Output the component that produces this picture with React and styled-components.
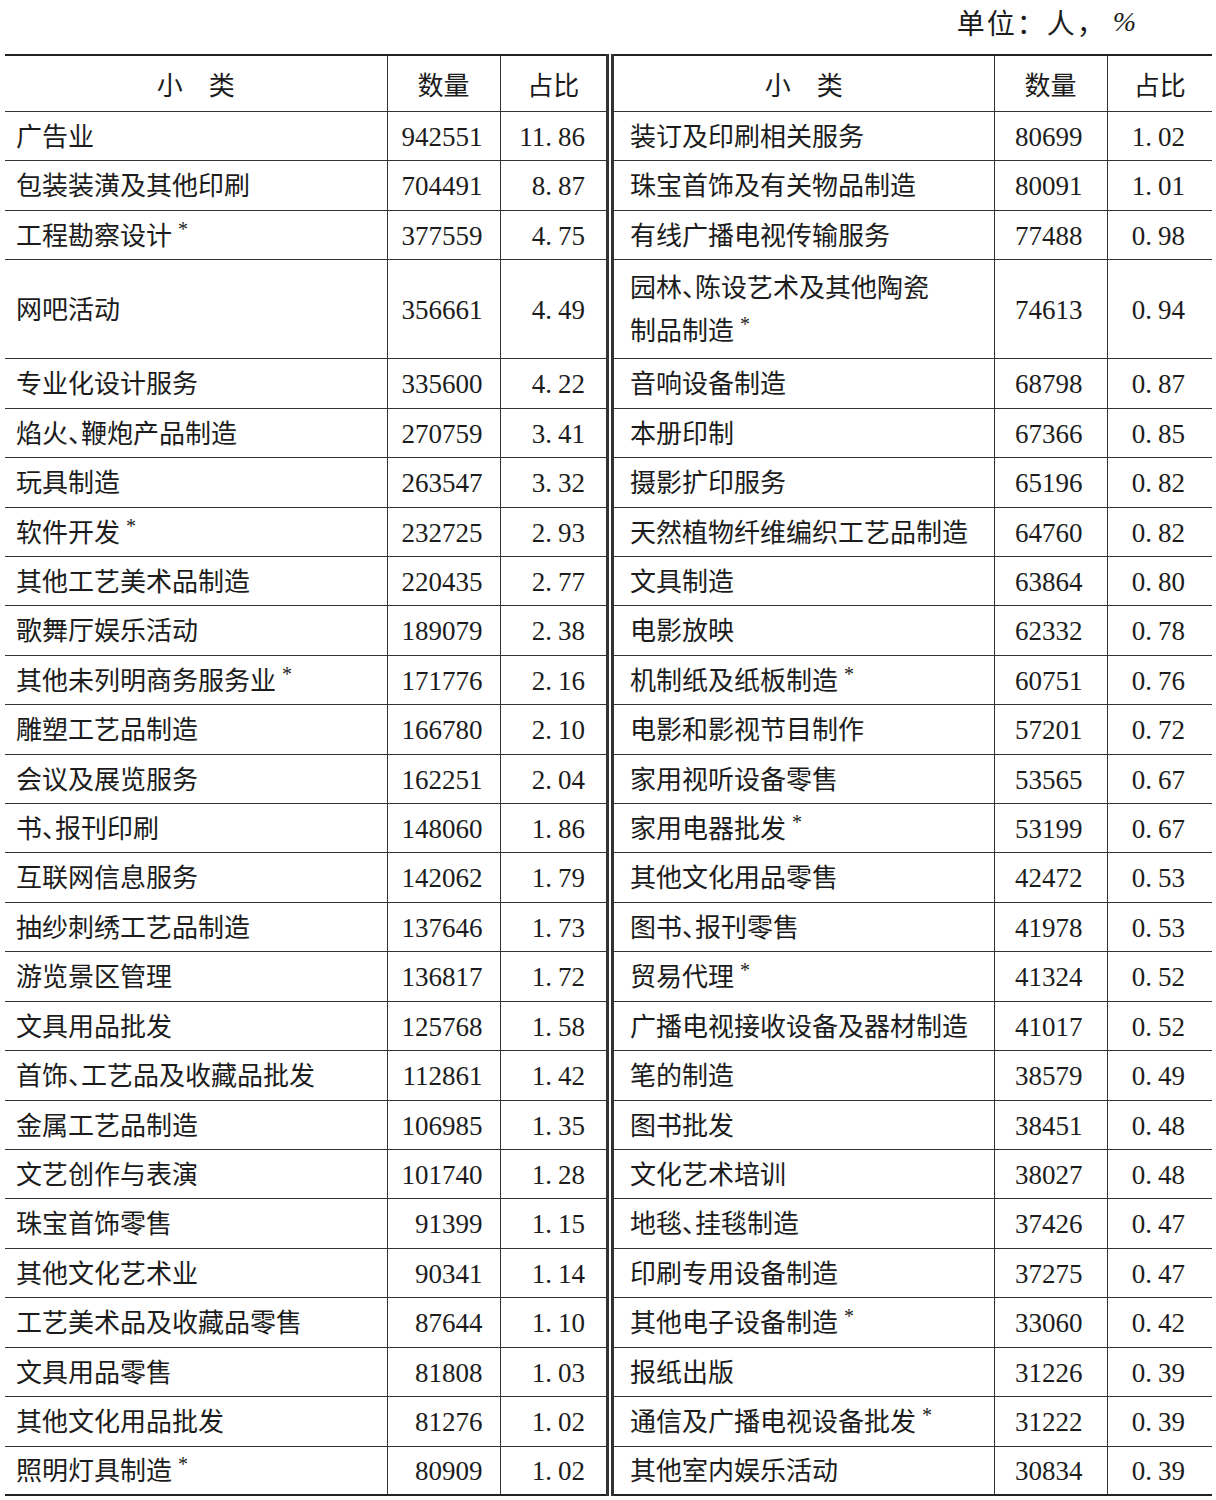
import React from 'react'
import styled, { createGlobalStyle } from 'styled-components'

const GlobalStyle = createGlobalStyle`
    body {
        margin: 0;
        background: #ffffff;
        color: #1c1c1c;
        font-family: "Liberation Serif", "Noto Sans CJK SC", serif;
    }
`

const Page = styled.div`
    width: 1216px;
    padding: 0 4px 0 5px;
    box-sizing: border-box;
`
const Unit = styled.div`
    height: 54px;
    display: flex;
    align-items: center;
    justify-content: flex-end;
    padding-right: 74px;
    padding-bottom: 10px;
    box-sizing: border-box;
    font-size: 28px;
    letter-spacing: 2px;
`
const Percent = styled.span`
    font-style: italic;
    margin-left: 6px;
`
const Table = styled.table`
    width: 1207px;
    border-collapse: collapse;
    table-layout: fixed;
    border-top: 2.5px solid #222;
    border-bottom: 2.5px solid #222;
    font-feature-settings: "halt";
`
const HeadRow = styled.tr`
    height: 56px;
`
const Row = styled.tr`
    height: ${({ h }) => h}px;
`
const HeadCell = styled.th`
    font-weight: normal;
    font-size: 26px;
    text-align: center;
    padding: 0;
    border-left: ${({ split }) => (split ? '8px double #333' : '1.5px solid #333')};
    border-bottom: 1.5px solid #333;
    &:first-child {
        border-left: none;
    }
`
const NameCell = styled.td`
    font-size: 26px;
    line-height: 43px;
    white-space: pre-line;
    padding: 3px 0 0 ${({ side }) => (side === 'right' ? '16px' : '11px')};
    border-left: ${({ side }) => (side === 'right' ? '8px double #333' : 'none')};
    border-bottom: 1.5px solid #333;
    vertical-align: middle;
`
const Star = styled.span`
    display: inline-block;
    font-size: 20px;
    line-height: 12px;
    transform: translateY(-9px);
    margin-left: 6px;
`
const NumCell = styled.td`
    font-size: 27px;
    text-align: right;
    padding: 3px ${({ side }) => (side === 'right' ? '24px' : '17px')} 0 0;
    border-left: 1.5px solid #333;
    border-bottom: 1.5px solid #333;
`
const RatioCell = styled(NumCell)`
    padding-right: ${({ side }) => (side === 'right' ? '27px' : '21px')};
`
const Dot = styled.span`
    margin-right: 6px;
`

const left = [
    ['广告业', '942551', '11.86'],
    ['包装装潢及其他印刷', '704491', '8.87'],
    ['工程勘察设计*', '377559', '4.75'],
    ['网吧活动', '356661', '4.49'],
    ['专业化设计服务', '335600', '4.22'],
    ['焰火、鞭炮产品制造', '270759', '3.41'],
    ['玩具制造', '263547', '3.32'],
    ['软件开发*', '232725', '2.93'],
    ['其他工艺美术品制造', '220435', '2.77'],
    ['歌舞厅娱乐活动', '189079', '2.38'],
    ['其他未列明商务服务业*', '171776', '2.16'],
    ['雕塑工艺品制造', '166780', '2.10'],
    ['会议及展览服务', '162251', '2.04'],
    ['书、报刊印刷', '148060', '1.86'],
    ['互联网信息服务', '142062', '1.79'],
    ['抽纱刺绣工艺品制造', '137646', '1.73'],
    ['游览景区管理', '136817', '1.72'],
    ['文具用品批发', '125768', '1.58'],
    ['首饰、工艺品及收藏品批发', '112861', '1.42'],
    ['金属工艺品制造', '106985', '1.35'],
    ['文艺创作与表演', '101740', '1.28'],
    ['珠宝首饰零售', '91399', '1.15'],
    ['其他文化艺术业', '90341', '1.14'],
    ['工艺美术品及收藏品零售', '87644', '1.10'],
    ['文具用品零售', '81808', '1.03'],
    ['其他文化用品批发', '81276', '1.02'],
    ['照明灯具制造*', '80909', '1.02'],
]

const right = [
    ['装订及印刷相关服务', '80699', '1.02'],
    ['珠宝首饰及有关物品制造', '80091', '1.01'],
    ['有线广播电视传输服务', '77488', '0.98'],
    ['园林、陈设艺术及其他陶瓷\n制品制造*', '74613', '0.94'],
    ['音响设备制造', '68798', '0.87'],
    ['本册印制', '67366', '0.85'],
    ['摄影扩印服务', '65196', '0.82'],
    ['天然植物纤维编织工艺品制造', '64760', '0.82'],
    ['文具制造', '63864', '0.80'],
    ['电影放映', '62332', '0.78'],
    ['机制纸及纸板制造*', '60751', '0.76'],
    ['电影和影视节目制作', '57201', '0.72'],
    ['家用视听设备零售', '53565', '0.67'],
    ['家用电器批发*', '53199', '0.67'],
    ['其他文化用品零售', '42472', '0.53'],
    ['图书、报刊零售', '41978', '0.53'],
    ['贸易代理*', '41324', '0.52'],
    ['广播电视接收设备及器材制造', '41017', '0.52'],
    ['笔的制造', '38579', '0.49'],
    ['图书批发', '38451', '0.48'],
    ['文化艺术培训', '38027', '0.48'],
    ['地毯、挂毯制造', '37426', '0.47'],
    ['印刷专用设备制造', '37275', '0.47'],
    ['其他电子设备制造*', '33060', '0.42'],
    ['报纸出版', '31226', '0.39'],
    ['通信及广播电视设备批发*', '31222', '0.39'],
    ['其他室内娱乐活动', '30834', '0.39'],
]

// rows are 49.4px apart in the scan; spread the rounding so lines land on whole pixels
const PITCH = 49.42
const TALL = 99
function rowHeights() {
    let n = 0
    return right.map(r => {
        if (r[0].includes('\n')) return TALL
        n += 1
        return Math.round(n * PITCH) - Math.round((n - 1) * PITCH)
    })
}
const heights = rowHeights()

function Name({ text }) {
    const starred = text.endsWith('*')
    return (
        <>
            {starred ? text.slice(0, -1) : text}
            {starred && <Star>*</Star>}
        </>
    )
}

function Ratio({ value }) {
    const [a, b] = value.split('.')
    return (
        <>
            {a}<Dot>.</Dot>{b}
        </>
    )
}

function Half({ item, side }) {
    return (
        <>
            <NameCell side={side}><Name text={item[0]} /></NameCell>
            <NumCell side={side}>{item[1]}</NumCell>
            <RatioCell side={side}><Ratio value={item[2]} /></RatioCell>
        </>
    )
}

export default function App() {
    return (
        <Page>
            <GlobalStyle />
            <Unit>单位：人，<Percent>%</Percent></Unit>
            <Table>
                <colgroup>
                    <col style={{ width: 382 }} />
                    <col style={{ width: 113 }} />
                    <col style={{ width: 110 }} />
                    <col style={{ width: 384 }} />
                    <col style={{ width: 113 }} />
                    <col style={{ width: 105 }} />
                </colgroup>
                <thead>
                    <HeadRow>
                        <HeadCell>小　类</HeadCell>
                        <HeadCell>数量</HeadCell>
                        <HeadCell>占比</HeadCell>
                        <HeadCell split>小　类</HeadCell>
                        <HeadCell>数量</HeadCell>
                        <HeadCell>占比</HeadCell>
                    </HeadRow>
                </thead>
                <tbody>
                    {left.map((item, i) => (
                        <Row key={item[0]} h={heights[i]}>
                            <Half item={item} side="left" />
                            <Half item={right[i]} side="right" />
                        </Row>
                    ))}
                </tbody>
            </Table>
        </Page>
    )
}
